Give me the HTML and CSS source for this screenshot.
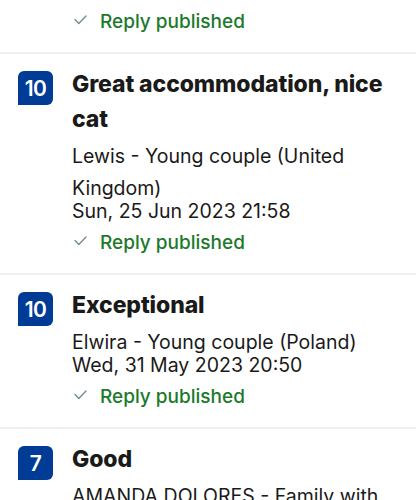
FILE: index.html
```html
<!DOCTYPE html>
<html lang="en">
<head>
<meta charset="utf-8">
<link rel="stylesheet" href="styles.css">
</head>
<body>
<div class="list">
  <div class="partial">
    <div class="reply">
      <svg class="check" width="13" height="10" viewBox="0 0 13 10"><path d="M1 4.5 L4.8 8.5 L12 1" fill="none" stroke="#6f8f72" stroke-width="1.3" stroke-linecap="round" stroke-linejoin="round"/></svg>
      <span>Reply published</span>
    </div>
  </div>

  <div class="card">
    <div class="badge">10</div>
    <div class="content">
      <div class="title">Great accommodation, nice cat</div>
      <div class="name">Lewis - Young couple (United Kingdom)</div>
      <div class="date">Sun, 25 Jun 2023 21:58</div>
      <div class="reply">
        <svg class="check" width="13" height="10" viewBox="0 0 13 10"><path d="M1 4.5 L4.8 8.5 L12 1" fill="none" stroke="#6f8f72" stroke-width="1.3" stroke-linecap="round" stroke-linejoin="round"/></svg>
        <span>Reply published</span>
      </div>
    </div>
  </div>

  <div class="card">
    <div class="badge">10</div>
    <div class="content">
      <div class="title">Exceptional</div>
      <div class="name">Elwira - Young couple (Poland)</div>
      <div class="date">Wed, 31 May 2023 20:50</div>
      <div class="reply">
        <svg class="check" width="13" height="10" viewBox="0 0 13 10"><path d="M1 4.5 L4.8 8.5 L12 1" fill="none" stroke="#6f8f72" stroke-width="1.3" stroke-linecap="round" stroke-linejoin="round"/></svg>
        <span>Reply published</span>
      </div>
    </div>
  </div>

  <div class="card">
    <div class="badge">7</div>
    <div class="content">
      <div class="title">Good</div>
      <div class="name">AMANDA DOLORES - Family with young children</div>
    </div>
  </div>
</div>
</body>
</html>
```

FILE: styles.css
```css
html, body {
  margin: 0;
  padding: 0;
  background: #ffffff;
}
body {
  font-family: Inter, "Noto Sans", sans-serif;
  color: #1a1a1a;
  height: 500px;
  overflow: hidden;
}
.partial {
  padding: 2px 18px 18px 72px;
}
.card {
  display: flex;
  align-items: flex-start;
  gap: 19px;
  padding: 13px 18px 18px 18px;
  border-top: 2px solid #f0f0f0;
}
.badge {
  flex: 0 0 auto;
  width: 35px;
  height: 34px;
  margin-top: 4px;
  background: #003b95;
  color: #ffffff;
  border-radius: 6px 6px 6px 0;
  display: flex;
  align-items: center;
  justify-content: center;
  font-size: 21px;
  font-weight: 600;
  letter-spacing: -0.5px;
}
.content {
  flex: 1 1 auto;
  min-width: 0;
}
.title {
  font-size: 23px;
  font-weight: 800;
  line-height: 35px;
  letter-spacing: -0.1px;
}
.name {
  font-size: 19.5px;
  line-height: 32px;
  margin-top: 3px;
}
.date {
  font-size: 19.5px;
  line-height: 24px;
  margin-top: -5px;
}
.reply {
  display: flex;
  align-items: center;
  gap: 13px;
  margin-top: 8px;
  font-size: 19px;
  line-height: 24px;
  font-weight: 500;
  color: #1c7a2b;
}
.check {
  flex: 0 0 auto;
  margin-left: 2px;
  margin-top: -5px;
}
```
